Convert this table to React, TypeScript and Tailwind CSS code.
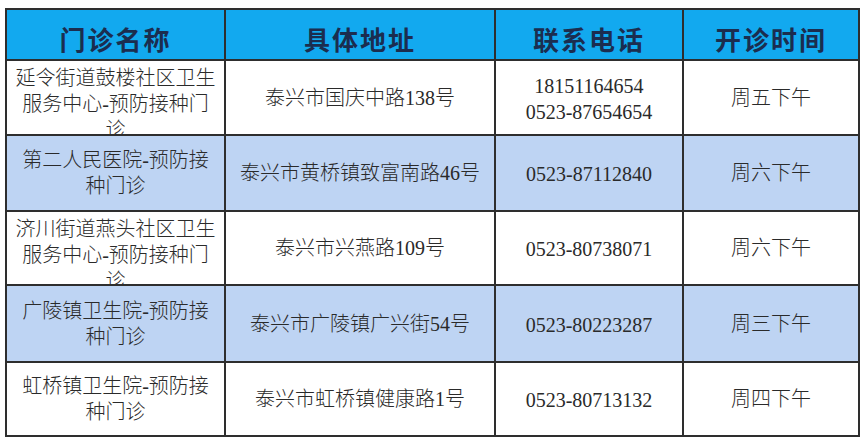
import React from 'react';

type Row = {
  name: string;
  tall?: boolean;
  address: string;
  phones: string[];
  hours: string;
  shaded?: boolean;
};

const rows: Row[] = [
  { name: '延令街道鼓楼社区卫生服务中心-预防接种门诊', tall: true, address: '泰兴市国庆中路138号', phones: ['18151164654', '0523-87654654'], hours: '周五下午' },
  { name: '第二人民医院-预防接种门诊', address: '泰兴市黄桥镇致富南路46号', phones: ['0523-87112840'], hours: '周六下午', shaded: true },
  { name: '济川街道燕头社区卫生服务中心-预防接种门诊', tall: true, address: '泰兴市兴燕路109号', phones: ['0523-80738071'], hours: '周六下午' },
  { name: '广陵镇卫生院-预防接种门诊', address: '泰兴市广陵镇广兴街54号', phones: ['0523-80223287'], hours: '周三下午', shaded: true },
  { name: '虹桥镇卫生院-预防接种门诊', address: '泰兴市虹桥镇健康路1号', phones: ['0523-80713132'], hours: '周四下午' },
];

const headers = ['门诊名称', '具体地址', '联系电话', '开诊时间'];

const font = { fontFamily: '"Liberation Serif", "Noto Sans CJK SC", serif' };

export default function App() {
  return (
    <div className="w-[864px] h-[446px] bg-white pt-[8px] pl-[5px]" style={font}>
      <div className="w-[855px] grid grid-cols-[219px_270px_188px_176px] grid-rows-[51px_75px_76px_74px_77px_74px] border-l-2 border-t-2 border-[#2e2e2e]">
        {headers.map(h => (
          <div
            key={h}
            className="bg-[#12a9ef] border-r-2 border-b-2 border-[#2e2e2e] flex items-center justify-center pt-[14px] text-[26px] font-bold tracking-[2px] text-[#1b2d4f] leading-none"
          >
            {h}
          </div>
        ))}
        {rows.map((r, i) => {
          const bg = r.shaded ? 'bg-[#bed4f3]' : 'bg-white';
          const cell = `${bg} border-r-2 border-b-2 border-[#2e2e2e] overflow-hidden text-[20px] text-[#2a2a2a] font-light`;
          return (
            <React.Fragment key={i}>
              <div className={`${cell} flex ${r.tall ? 'items-start pt-[4px]' : 'items-center'} justify-center`}>
                <div className="w-[203px] text-center leading-[26px]">{r.name}</div>
              </div>
              <div className={`${cell} flex items-center justify-center leading-[26px]`}>{r.address}</div>
              <div className={`${cell} flex flex-col items-center justify-center pt-[2px] leading-[26px]`}>
                {r.phones.map(p => (
                  <span key={p}>{p}</span>
                ))}
              </div>
              <div className={`${cell} flex items-center justify-center leading-[26px]`}>{r.hours}</div>
            </React.Fragment>
          );
        })}
      </div>
    </div>
  );
}
